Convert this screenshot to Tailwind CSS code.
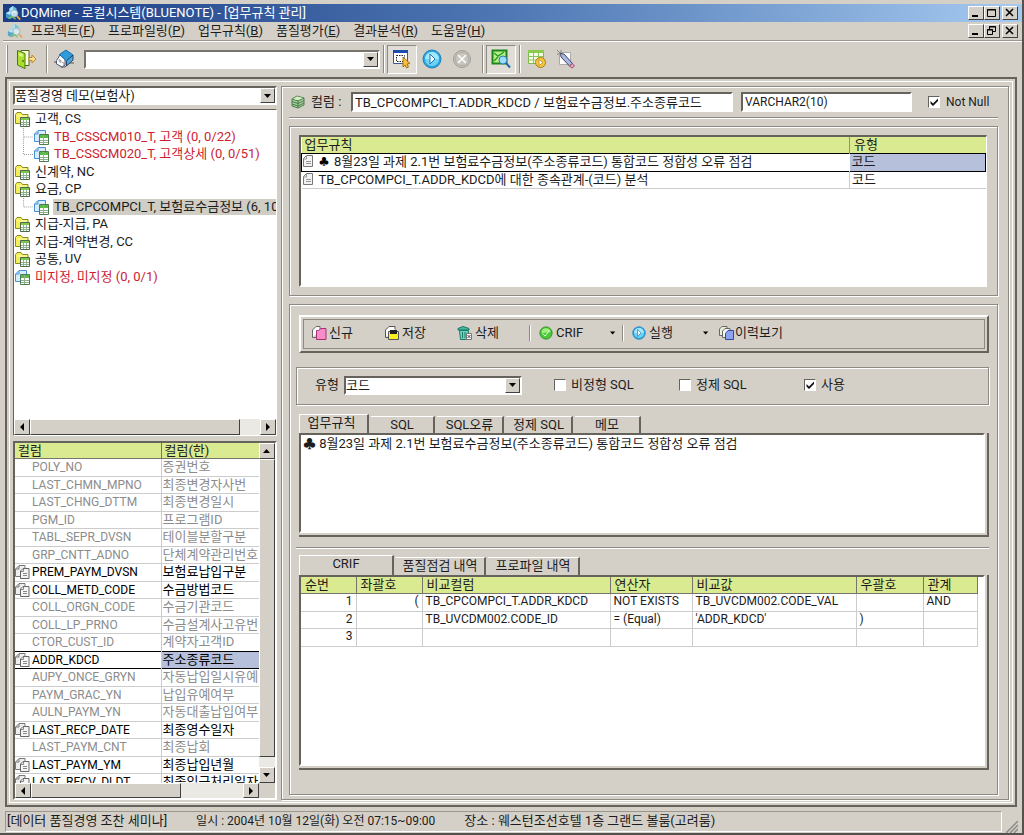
<!DOCTYPE html>
<html lang="ko">
<head>
<meta charset="utf-8">
<title>DQMiner</title>
<script src="https://cdn.jsdelivr.net/npm/@tailwindcss/browser@4"></script>
</head>
<body class="bg-[#d4d0c8] font-['Roboto','Noto_Sans_CJK_KR',sans-serif] text-[13px] leading-4 text-[#1c1c1c]">

<svg class="hidden" aria-hidden="true">
  <symbol id="folder" viewBox="0 0 16 16">
    <path d="M.5 12.500V3.500L2 1.500h4l1.500 2h5.500v9z" fill="#f4ee5a" stroke="#8a8a1c"/>
    <path d="M2 5h10" stroke="#fffbb0"/>
    <path d="M5.500 6.500h9v9h-9z" fill="#fff" stroke="#4c6b4c"/><path d="M6 7h8v2H6z" fill="#7cc84c"/>
    <path d="M6 11.500h8M6 13.500h8M8.500 9v6M11.500 9v6" stroke="#8fb08f"/>
  </symbol>
  <symbol id="sheet" viewBox="0 0 16 16">
    <path d="M.5 12.500V5L4 1.500h7.500v11z" fill="#d6ecff" stroke="#4a90d8"/><path d="M4 2v3H1" fill="none" stroke="#4a90d8"/>
    <path d="M5.500 5.500h9v10h-9z" fill="#fff" stroke="#4c7b4c"/><path d="M6 6h8v3H6z" fill="#5cb848"/>
    <path d="M6 11.500h8M6 13.500h8M9.500 6v9" stroke="#8fb08f"/>
  </symbol>
  <symbol id="copy" viewBox="0 0 16 16">
    <path d="M.5 12.500V5L4 1.500h6v11z" fill="#eee" stroke="#777"/><path d="M4 2v3H1" fill="none" stroke="#777"/>
    <path d="M5.500 14.500V7L8 4.500h6v10z" fill="#f4f4f4" stroke="#666"/><path d="M8.500 5v2.500H6M8 9.500h4M8 11.500h4" fill="none" stroke="#888"/>
  </symbol>
  <symbol id="page" viewBox="0 0 12 14">
    <path d="M1.500 12.500V4.500L4.500 1.500h6v11z" fill="#f2f2f2" stroke="#777"/><path d="M4.500 2v3h-3M4 7.500h5M4 9.500h5" fill="none" stroke="#999"/>
  </symbol>
  <symbol id="arrow-down" viewBox="0 0 8 8"><path d="M0 2h7L3.500 6z" fill="#000"/></symbol>
  <symbol id="arrow-up" viewBox="0 0 8 8"><path d="M0 6h7L3.500 2z" fill="#000"/></symbol>
  <symbol id="arrow-left" viewBox="0 0 8 8"><path d="M6 0v8L2 4z" fill="#000"/></symbol>
  <symbol id="arrow-right" viewBox="0 0 8 8"><path d="M2 0v8l4-4z" fill="#000"/></symbol>
  <symbol id="check" viewBox="0 0 12 12"><path d="M2.500 5v2.500L5 10l5-5V2.500L5 7.500z" fill="#111"/></symbol>
  <symbol id="logo" viewBox="0 0 18 18">
    <path d="M5 4l4-3 4 3v5H5z" fill="#5cc4ea"/><path d="M5 4l4-3v8H5z" fill="#a8e4f8"/>
    <path d="M1 9l4-2 4 2v5l-4 2-4-2z" fill="#3a9ccc"/><path d="M1 9l4-2 4 2-4 2z" fill="#b6ecfa"/>
    <circle cx="10.500" cy="9.500" r="4" fill="#dff4fc" fill-opacity=".85" stroke="#9aa8b4"/><path d="M13.500 12.500l3.500 4" stroke="#e8a040" stroke-width="2"/>
    <path d="M4 15l4-2 4 3" stroke="#7ac060" fill="none" stroke-width="1.500"/>
  </symbol>
  <symbol id="play" viewBox="0 0 20 20">
    <circle cx="10" cy="10" r="9" fill="#2aa4e0" stroke="#2380b8"/><circle cx="10" cy="10" r="7" fill="#6cd2f6"/>
    <path d="M3 10a7 7 0 0 1 14 0z" fill="#a4e8fc"/><path d="M8 5v10l5-5z" fill="#fff" stroke="#1878b4"/>
  </symbol>
</svg>

<div class="flex h-screen min-h-[600px] flex-col overflow-hidden border-r-2 border-b-2 border-[#55524e] pt-1 pl-[3px]">

  <!-- Title bar -->
  <header class="flex h-[18px] shrink-0 items-center bg-linear-to-r from-[#1c3c84] via-[#5078b4] to-[#a6caf0] pr-1 pb-px pl-0.5 text-white">
    <svg class="h-4 w-4 shrink-0"><use href="#logo"/></svg>
    <h1 class="flex-1 whitespace-nowrap">DQMiner - 로컬시스템(BLUENOTE) - [업무규칙 관리]</h1>
    <div class="flex">
      <button aria-label="최소화" class="h-[14px] w-4 border border-white border-r-[#404040] border-b-[#404040] bg-[#d4d0c8]"><svg class="h-3 w-3" viewBox="0 0 12 12"><path d="M3 9h6" stroke="#000" stroke-width="2"/></svg></button>
      <button aria-label="최대화" class="h-[14px] w-4 border border-white border-r-[#404040] border-b-[#404040] bg-[#d4d0c8]"><svg class="h-3 w-3" viewBox="0 0 12 12"><path d="M2.500 2.500h8v7h-8zM2 3h9" fill="none" stroke="#000"/></svg></button>
      <button aria-label="닫기" class="ml-0.5 h-[14px] w-4 border border-white border-r-[#404040] border-b-[#404040] bg-[#d4d0c8]"><svg class="h-3 w-3" viewBox="0 0 12 12"><path d="M3 2l7 7M10 2L3 9" stroke="#000" stroke-width="1.500"/></svg></button>
    </div>
  </header>

  <!-- Menu -->
  <nav class="flex h-[19px] shrink-0 items-center border-b border-[#9b978f] pr-1 pl-1 whitespace-nowrap">
    <svg class="h-4 w-4 shrink-0 opacity-80"><use href="#logo"/></svg>
    <div class="ml-2 flex flex-1 gap-[13px]">
      <button>프로젝트(<u>F</u>)</button><button>프로파일링(<u>P</u>)</button><button>업무규칙(<u>B</u>)</button><button>품질평가(<u>E</u>)</button><button>결과분석(<u>R</u>)</button><button>도움말(<u>H</u>)</button>
    </div>
    <div class="flex">
      <button aria-label="창 최소화" class="h-[14px] w-4 border border-white border-r-[#404040] border-b-[#404040]"><svg class="h-3 w-3" viewBox="0 0 12 12"><path d="M3 9h6" stroke="#000" stroke-width="2"/></svg></button>
      <button aria-label="창 복원" class="h-[14px] w-4 border border-white border-r-[#404040] border-b-[#404040]"><svg class="h-3 w-3" viewBox="0 0 12 12"><path d="M4.500 4V1.500h6v5H8M4 2h7M2.500 4.500h5v5h-5zM2 5h6" fill="none" stroke="#000"/></svg></button>
      <button aria-label="창 닫기" class="ml-0.5 h-[14px] w-4 border border-white border-r-[#404040] border-b-[#404040]"><svg class="h-3 w-3" viewBox="0 0 12 12"><path d="M3 2l7 7M10 2L3 9" stroke="#000" stroke-width="1.500"/></svg></button>
    </div>
  </nav>

  <!-- Toolbar -->
  <div class="mb-px flex h-[35px] shrink-0 items-center border-t border-white pl-[3px]">
    <div class="h-7 w-0.5 border-l border-white bg-[#8d8a84]"></div>
    <button aria-label="종료" class="ml-2"><svg class="h-5 w-5" viewBox="0 0 20 20"><path d="M5 1.500h8v15H5z" fill="#fffde0" stroke="#4a6a14"/><path d="M1.500 1.500L9 4.500v15L1.500 16z" fill="#a8e02c" stroke="#4a7a10"/><path d="M3 3.500L7 5v3L3 7z" fill="#d8f67c"/><path d="M13 8.500h3V6l4 4-4 4v-2.500h-3z" fill="#fbe08c" stroke="#b88830"/><path d="M7 11v2" stroke="#333"/></svg></button>
    <div class="ml-2.5 h-7 w-0.5 border-r border-white bg-[#8d8a84]"></div>
    <button aria-label="홈" class="ml-1.5"><svg class="h-5 w-5" viewBox="0 0 20 20"><path d="M0 13h4l3 5h4l4-4h5" stroke="#555" fill="none"/><path d="M2.500 11.500L6 6l5 4v6l-3 2-5.500-3z" fill="#fff" stroke="#557"/><path d="M5.500 5.500L12 1l7 5-6.500 6z" fill="#2c9cdc" stroke="#186ca4"/><path d="M12.500 12L19 6v5l-6.500 6z" fill="#58a8dc" stroke="#246"/><path d="M5 10.500l2 1v2l-2-1zM8 13l2 1v3" stroke="#777" fill="#ddd" stroke-width=".6"/></svg></button>
    <div class="relative ml-2.5 h-[19px] w-[296px]">
      <select aria-label="검색" class="block h-full w-full appearance-none border-2 border-[#77746e] border-r-white border-b-white bg-white px-1"><option></option></select>
      <span class="pointer-events-none absolute top-0.5 right-0.5 flex h-[15px] w-[15px] items-center justify-center border border-white border-r-[#404040] border-b-[#404040] bg-[#d4d0c8]"><svg class="h-2 w-2"><use href="#arrow-down"/></svg></span>
    </div>
    <div class="ml-[3px] h-7 w-0.5 border-r border-white bg-[#8d8a84]"></div>
    <button aria-label="선택" class="ml-0.5 flex h-[29px] w-[30px] items-center justify-center border border-[#8d8a84] border-r-white border-b-white bg-[#e0ddd6]"><svg class="h-5 w-5" viewBox="0 0 20 20"><path d="M1.500 2.500h14v12h-14z" fill="#fff" stroke="#3a5a9c"/><path d="M1 1h15v3H1z" fill="#1c4cb0"/><path d="M4.500 6.500h8v6h-8z" fill="none" stroke="#222" stroke-dasharray="1.500 1"/><path d="M11 8l7 6.500-3 .5 1.500 3-2 1-1.500-3-2 2z" fill="#fcc040" stroke="#a86c10"/></svg></button>
    <button aria-label="실행" class="ml-[5px]"><svg class="h-5 w-5"><use href="#play"/></svg></button>
    <button aria-label="중지" class="ml-2.5"><svg class="h-5 w-5" viewBox="0 0 20 20"><circle cx="10" cy="10" r="8.500" fill="#c4c1bb" stroke="#a19e98"/><circle cx="10" cy="10" r="6.500" fill="#cac7c1" stroke="#b0ada7"/><path d="M6 6l8 8M14 6l-8 8" stroke="#fff" stroke-width="1.500"/></svg></button>
    <div class="ml-2.5 h-7 w-0.5 border-r border-white bg-[#8d8a84]"></div>
    <button aria-label="조회" class="ml-0.5 flex h-[29px] w-[30px] items-center justify-center border border-[#8d8a84] border-r-white border-b-white bg-[#e0ddd6]"><svg class="h-5 w-5" viewBox="0 0 20 20"><path d="M1.500 1.500h14v13h-14z" fill="#b8f08c" stroke="#1c8418" stroke-width="2"/><path d="M3 4l4 3 6-4M3 12l4-4" stroke="#2c9c24" fill="none" stroke-width="1.500"/><circle cx="12" cy="11" r="4" fill="#9cdcf8" stroke="#2c7cb0"/><path d="M15 14l4 4.500" stroke="#1c6ca8" stroke-width="2"/></svg></button>
    <div class="ml-[3px] h-7 w-0.5 border-r border-white bg-[#8d8a84]"></div>
    <button aria-label="일정" class="ml-1.5"><svg class="h-5 w-5" viewBox="0 0 20 20"><path d="M1.500 1.500h15v13h-15z" fill="#f4fce8" stroke="#7cb848"/><path d="M1 1h16v3H1z" fill="#8ccc4c"/><path d="M1 7.500h15M1 11h15M6.500 2v12M11.500 2v12" stroke="#8cc45c"/><circle cx="13.500" cy="13.500" r="5" fill="#f8c83c" stroke="#b07c18"/><path d="M12 10.500v6l4-3z" fill="#fff" stroke="#b07c18" stroke-width=".7"/></svg></button>
    <button aria-label="편집" class="ml-[9px]"><svg class="h-5 w-5" viewBox="0 0 20 20"><path d="M3.500 3.500h11v12h-11z" fill="#fff" stroke="#aaa"/><path d="M1 1l4 4M1 5h3M5 1v3" stroke="#888"/><path d="M4.500 4.500L8 5l8.500 9.500-3 2.500L5 8z" fill="#a8b8e8" stroke="#445"/><path d="M13.500 17l3-2.500 2 2.500-2.500 2z" fill="#f0a0c0" stroke="#a05078"/></svg></button>
  </div>

  <!-- Workspace -->
  <main class="mr-[5px] ml-[2px] flex min-h-0 flex-1 border-2 border-[#66635d] p-0.5">
    <div class="flex min-w-0 flex-1 gap-1 border border-white p-[3px] pt-1 pb-0.5">

      <!-- Left column -->
      <aside class="flex w-[264px] shrink-0 flex-col">
        <div class="relative h-[19px] shrink-0">
          <select aria-label="시스템" class="block h-full w-full appearance-none border-2 border-[#66635d] border-r-white border-b-white bg-white p-0 leading-[15px]"><option>품질경영 데모(보험사)</option></select>
          <span class="pointer-events-none absolute top-0.5 right-0.5 flex h-[15px] w-[15px] items-center justify-center border border-white border-r-[#404040] border-b-[#404040] bg-[#d4d0c8]"><svg class="h-2 w-2"><use href="#arrow-down"/></svg></span>
        </div>

        <div class="mt-1 flex min-h-0 flex-[327] flex-col border border-[#66635d] border-r-white border-b-white bg-white">
          <ul id="tree" class="min-h-0 flex-1 overflow-hidden pl-px whitespace-nowrap"></ul>
          <div class="flex h-4 shrink-0 bg-[#ebe9e4]">
            <button aria-label="왼쪽으로" class="flex w-4 items-center justify-center border border-white border-r-[#404040] border-b-[#404040] bg-[#d4d0c8]"><svg class="h-2 w-2"><use href="#arrow-left"/></svg></button>
            <div class="w-[210px] border border-white border-r-[#404040] border-b-[#404040] bg-[#d4d0c8]"></div>
            <button aria-label="오른쪽으로" class="ml-auto flex w-4 items-center justify-center border border-white border-r-[#404040] border-b-[#404040] bg-[#d4d0c8]"><svg class="h-2 w-2"><use href="#arrow-right"/></svg></button>
          </div>
        </div>

        <div class="mt-[5px] flex min-h-0 flex-[358] border-2 border-[#66635d] border-r-white border-b-white bg-[#d4d0c8]">
          <div class="flex min-w-0 flex-1 flex-col">
            <div class="min-h-0 flex-1 overflow-hidden bg-white">
              <table class="w-full table-fixed border-collapse whitespace-nowrap">
                <thead><tr class="h-4 bg-[#d9ea90] text-left leading-[15px]">
                  <th class="w-[146px] border-r border-b border-[#77746e] p-0 pl-[3px] font-normal">컬럼</th>
                  <th class="border-b border-[#77746e] p-0 pl-[3px] font-normal">컬럼(한)</th>
                </tr></thead>
                <tbody id="columns"></tbody>
              </table>
            </div>
            <div class="flex h-[15px] shrink-0 bg-[#ebe9e4]">
              <button aria-label="왼쪽으로" class="flex w-4 items-center justify-center border border-white border-r-[#404040] border-b-[#404040] bg-[#d4d0c8]"><svg class="h-2 w-2"><use href="#arrow-left"/></svg></button>
              <div class="w-[150px] border border-white border-r-[#404040] border-b-[#404040] bg-[#d4d0c8]"></div>
              <button aria-label="오른쪽으로" class="ml-auto flex w-4 items-center justify-center border border-white border-r-[#404040] border-b-[#404040] bg-[#d4d0c8]"><svg class="h-2 w-2"><use href="#arrow-right"/></svg></button>
            </div>
          </div>
          <div class="mb-[15px] flex w-4 shrink-0 flex-col bg-[#ebe9e4]">
            <button aria-label="위로" class="flex h-4 items-center justify-center border border-white border-r-[#404040] border-b-[#404040] bg-[#d4d0c8]"><svg class="h-2 w-2"><use href="#arrow-up"/></svg></button>
            <div class="mb-2.5 flex-1 border border-white border-r-[#404040] border-b-[#404040] bg-[#d4d0c8]"></div>
            <button aria-label="아래로" class="flex h-4 items-center justify-center border border-white border-r-[#404040] border-b-[#404040] bg-[#d4d0c8]"><svg class="h-2 w-2"><use href="#arrow-down"/></svg></button>
          </div>
        </div>
      </aside>

      <!-- Right column -->
      <section class="flex min-w-0 flex-1 flex-col border border-[#8d8a84] pr-2.5 pb-1 pl-[7px] shadow-[inset_1px_1px_0_#fff,1px_1px_0_#fff]">
        <div class="flex h-[31px] shrink-0 items-center border-b border-[#8d8a84] pl-0.5 shadow-[0_1px_0_#fff]">
          <svg class="h-[14px] w-[14px] shrink-0" viewBox="0 0 14 14"><path d="M1 4l5-3 7 2v7l-6 3-6-2z" fill="#a8d09c" stroke="#4c7c4c"/><path d="M1 4l6 2 6-3M7 6v7M1 6.500l6 2 6-3M1 9l6 2 6-3" fill="none" stroke="#4c7c4c"/><path d="M2 4l4-2.500L12 3 7 5z" fill="#d4f0c4"/></svg>
          <label for="column-name" class="ml-1.5 w-10 whitespace-nowrap">컬럼 :</label>
          <input id="column-name" value="TB_CPCOMPCI_T.ADDR_KDCD / 보험료수금정보.주소종류코드" class="h-5 w-[382px] border-2 border-[#66635d] border-r-white border-b-white bg-white px-0.5 pb-0.5">
          <input aria-label="데이터 타입" value="VARCHAR2(10)" class="ml-2 h-5 w-[171px] border-2 border-[#66635d] border-r-white border-b-white bg-white px-0.5 text-xs">
          <label class="relative ml-4 flex items-center whitespace-nowrap"><input type="checkbox" checked class="peer mr-1.5 h-3 w-3 appearance-none border border-[#66635d] border-r-white border-b-white bg-white"><svg class="absolute left-0 hidden h-3 w-3 peer-checked:block"><use href="#check"/></svg><span class="text-xs">Not Null</span></label>
        </div>

        <!-- Rule list -->
        <div class="mt-2 h-[170px] shrink-0 border border-[#8d8a84] pt-2 pr-2.5 pb-2 pl-[9px] shadow-[inset_1px_1px_0_#fff,1px_1px_0_#fff]">
          <div class="h-full border-2 border-r border-[#66635d] border-r-white border-b-white bg-white">
            <table class="w-full table-fixed border-collapse whitespace-nowrap">
              <thead><tr class="h-4 bg-[#d9ea90] text-left leading-[15px]">
                <th class="border-r border-[#8d9a60] p-0 pl-[3px] font-normal">업무규칙</th>
                <th class="w-[136px] p-0 pl-1 font-normal">유형</th>
              </tr></thead>
              <tbody class="leading-[15px]">
                <tr class="h-[18px] border border-black"><td class="p-0 align-top"><div class="flex h-[15px] items-center"><svg class="h-[14px] w-3"><use href="#page"/></svg><span class="ml-[5px] w-[15px] text-[10px] text-black">♣</span><span>8월23일 과제 2.1번 보험료수금정보(주소종류코드) 통합코드 정합성 오류 점검</span></div></td><td class="bg-[#b6c0da] p-0 pl-0.5 align-top">코드</td></tr>
                <tr class="h-[17px] border-b border-[#ccc]"><td class="border-r border-[#ccc] p-0 align-top"><div class="flex h-[15px] items-center"><svg class="h-[14px] w-3"><use href="#page"/></svg><span class="ml-[5px]">TB_CPCOMPCI_T.ADDR_KDCD에 대한 종속관계-(코드) 분석</span></div></td><td class="p-0 pl-0.5 align-top">코드</td></tr>
              </tbody>
            </table>
          </div>
        </div>

        <!-- Rule editor -->
        <div class="mt-2 flex min-h-0 flex-1 flex-col border border-[#8d8a84] pt-2.5 pr-2 pb-6 pl-1.5 shadow-[inset_1px_1px_0_#fff,1px_1px_0_#fff]">
          <div class="ml-[3px] h-[38px] shrink-0 border-2 border-white border-r-[#66635d] border-b-[#66635d] p-0.5">
            <div class="flex h-full items-center border border-[#8d8a84] pb-0.5 pl-[7px] whitespace-nowrap">
              <button class="flex w-[73px] items-center gap-0.5"><svg class="h-4 w-4" viewBox="0 0 16 16"><path d="M1.500 12.500V5L5 1.500h4v3" fill="#fff" stroke="#666"/><path d="M1.500 12.500h4" stroke="#666"/><path d="M5.500 14.500v-9h2L10 3.500h5v11z" fill="#f88cc8" stroke="#a83070"/></svg>신규</button>
              <button class="flex w-[73px] items-center gap-0.5"><svg class="h-4 w-4" viewBox="0 0 16 16"><path d="M1.500 12.500V5L5 1.500h6v3" fill="#fff" stroke="#555"/><path d="M1.500 12.500h3" stroke="#555"/><path d="M4.500 6.500h10v8h-10z" fill="#f8f020" stroke="#555"/><path d="M6 5h7v4H6z" fill="#222"/></svg>저장</button>
              <button class="flex w-[72px] items-center gap-0.5"><svg class="h-4 w-4" viewBox="0 0 16 16"><path d="M2.500 5.500h9l-1 9h-7z" fill="#6cd8c0" stroke="#187868"/><path d="M1 3.500l5-2 6 2v1.500H1z" fill="#48b8a0" stroke="#187868"/><path d="M5.500 7v6M8 7v6" stroke="#187868"/><path d="M9.500 8.500h5v6h-5z" fill="#fff" stroke="#777"/><path d="M10.500 10l3 3M13.500 10l-3 3" stroke="#444"/></svg>삭제</button>
              <div class="h-4 w-0.5 border-r border-white bg-[#8d8a84]"></div>
              <button class="ml-2 flex w-[71px] items-center gap-[3px]"><svg class="h-[14px] w-[14px]" viewBox="0 0 16 16"><circle cx="8" cy="8" r="7" fill="#4cc83c" stroke="#248c1c"/><path d="M3 8a5 5 0 0 1 10-1z" fill="#a0f080"/><path d="M4 8.500l3 3L12 5" fill="none" stroke="#e8ffe0"/></svg>CRIF</button>
              <button aria-label="CRIF 옵션"><svg class="h-1.5 w-1.5" viewBox="0 0 8 8"><use href="#arrow-down"/></svg></button>
              <div class="ml-1.5 h-4 w-0.5 border-r border-white bg-[#8d8a84]"></div>
              <button class="ml-2 flex w-[71px] items-center gap-[3px]"><svg class="h-[14px] w-[14px]" viewBox="0 0 20 20"><use href="#play"/></svg>실행</button>
              <button aria-label="실행 옵션"><svg class="h-1.5 w-1.5" viewBox="0 0 8 8"><use href="#arrow-down"/></svg></button>
              <button class="ml-2.5 flex items-center"><svg class="h-4 w-4" viewBox="0 0 16 16"><path d="M.5 10.500V4L3 1.500h5v9z" fill="#e8f0d8" stroke="#666"/><path d="M3.500 12.500V6L6 3.500h5v9z" fill="#f4f4f4" stroke="#666"/><path d="M6.500 14.500V8.500L9 5.500h5.500v9z" fill="#8ca4f0" stroke="#3048a0"/></svg>이력보기</button>
            </div>
          </div>

          <div class="mt-[14px] flex h-[38px] shrink-0 items-center border border-[#8d8a84] pb-0.5 pl-[18px] whitespace-nowrap shadow-[inset_1px_1px_0_#fff,1px_1px_0_#fff]">
            <label for="rule-type" class="w-[29px]">유형</label>
            <div class="relative h-[19px] w-[178px]">
              <select id="rule-type" class="block h-full w-full appearance-none border-2 border-[#66635d] border-r-white border-b-white bg-white p-0 leading-[15px]"><option>코드</option></select>
              <span class="pointer-events-none absolute top-0.5 right-0.5 flex h-[15px] w-[15px] items-center justify-center border border-white border-r-[#404040] border-b-[#404040] bg-[#d4d0c8]"><svg class="h-2 w-2"><use href="#arrow-down"/></svg></span>
            </div>
            <label class="ml-8 flex w-[125px] items-center gap-[5px]"><input type="checkbox" class="h-3 w-3 appearance-none border border-[#66635d] border-r-white border-b-white bg-white">비정형 SQL</label>
            <label class="flex w-[125px] items-center gap-[5px]"><input type="checkbox" class="h-3 w-3 appearance-none border border-[#66635d] border-r-white border-b-white bg-white">정제 SQL</label>
            <label class="relative flex items-center gap-[5px]"><input type="checkbox" checked class="peer h-3 w-3 appearance-none border border-[#66635d] border-r-white border-b-white bg-white"><svg class="absolute left-0 hidden h-3 w-3 peer-checked:block"><use href="#check"/></svg>사용</label>
          </div>

          <div role="tablist" class="mt-[9px] ml-[3px] flex h-[19px] shrink-0 items-end gap-0.5">
            <button role="tab" aria-selected="true" class="h-[19px] w-[70px] border-t border-r-2 border-l border-white border-r-[#66635d] pr-1 pb-0.5">업무규칙</button>
            <button role="tab" class="h-[17px] w-16 border-t border-r-2 border-white border-r-[#66635d]">SQL</button>
            <button role="tab" class="h-[17px] w-[67px] border-t border-r-2 border-white border-r-[#66635d]">SQL오류</button>
            <button role="tab" class="h-[17px] w-[67px] border-t border-r-2 border-white border-r-[#66635d]">정제 SQL</button>
            <button role="tab" class="h-[17px] w-[66px] border-t border-r-2 border-white border-r-[#66635d]">메모</button>
          </div>
          <div class="ml-[3px] flex min-h-0 flex-[102] border-r-2 border-b-2 border-[#66635d] pr-0.5 pb-0.5">
            <textarea aria-label="업무규칙" class="h-full w-full resize-none border-2 border-[#66635d] border-r-white border-b-white bg-white px-0.5 leading-[18px]">♣ 8월23일 과제 2.1번 보험료수금정보(주소종류코드) 통합코드 정합성 오류 점검</textarea>
          </div>

          <hr class="mt-2.5 h-0.5 shrink-0 border-t border-[#8d8a84] bg-white">

          <div role="tablist" class="mt-1.5 ml-[3px] flex h-5 shrink-0 items-end gap-0.5">
            <button role="tab" aria-selected="true" class="h-5 w-[95px] border-t border-r-2 border-l border-white border-r-[#66635d] pb-1">CRIF</button>
            <button role="tab" class="h-[18px] w-[90px] border-t border-r-2 border-white border-r-[#66635d] whitespace-nowrap">품질점검 내역</button>
            <button role="tab" class="h-[18px] w-[92px] border-t border-r-2 border-white border-r-[#66635d] whitespace-nowrap">프로파일 내역</button>
          </div>
          <div class="ml-[3px] min-h-0 flex-[196] border-r-2 border-b-2 border-[#66635d] pr-0.5 pb-0.5">
            <div class="h-full overflow-hidden border-2 border-[#66635d] border-r-white border-b-white bg-white">
              <table class="w-[676px] table-fixed border-collapse whitespace-nowrap">
                <colgroup><col class="w-[55px]"><col class="w-[66px]"><col class="w-[188px]"><col class="w-[82px]"><col class="w-[164px]"><col class="w-[67px]"><col class="w-[54px]"></colgroup>
                <thead><tr class="h-[17px] bg-[#d9ea90] text-left leading-[15px] [&>th]:border-r [&>th]:border-b [&>th]:border-[#77746e] [&>th]:p-0 [&>th]:pl-1 [&>th]:font-normal">
                  <th>순번</th><th>좌괄호</th><th>비교컬럼</th><th>연산자</th><th>비교값</th><th>우괄호</th><th>관계</th>
                </tr></thead>
                <tbody class="text-xs leading-[15px] [&_td]:border-r [&_td]:border-b [&_td]:border-[#ccc] [&_td]:px-[3px] [&_td]:py-0 [&_td]:align-top">
                  <tr class="h-[18px]"><td class="text-right">1</td><td class="text-right">(</td><td>TB_CPCOMPCI_T.ADDR_KDCD</td><td>NOT EXISTS</td><td>TB_UVCDM002.CODE_VAL</td><td></td><td>AND</td></tr>
                  <tr class="h-[17px]"><td class="text-right">2</td><td></td><td>TB_UVCDM002.CODE_ID</td><td>= (Equal)</td><td>'ADDR_KDCD'</td><td>)</td><td></td></tr>
                  <tr class="h-[18px]"><td class="text-right">3</td><td></td><td></td><td></td><td></td><td></td><td></td></tr>
                </tbody>
              </table>
            </div>
          </div>
        </div>
      </section>
    </div>
  </main>

  <!-- Status bar -->
  <footer class="mt-0.5 flex h-6 shrink-0 items-center pl-0.5">
    <div class="flex h-[21px] flex-1 items-center gap-[29px] border border-[#9b978f] border-r-white border-b-white pl-px whitespace-nowrap">
      <span>[데이터 품질경영 조찬 세미나]</span><span class="text-xs">일시 : 2004년 10월 12일(화) 오전 07:15~09:00</span><span>장소 : 웨스턴조선호텔 1층 그랜드 볼룸(고려룸)</span>
    </div>
    <svg class="mr-1 ml-1 h-3 w-3 self-end" viewBox="0 0 12 12"><path d="M0 12L12 0M4 12l8-8M8 12l4-4" stroke="#8d8a84" stroke-width="1.500"/></svg>
  </footer>
</div>

<script>
  const tree = [
    ['folder', '고객, CS'],
    ['sheet', 'TB_CSSCM010_T, 고객 (0, 0/22)', 'red', 'mid'],
    ['sheet', 'TB_CSSCM020_T, 고객상세 (0, 0/51)', 'red', 'last'],
    ['folder', '신계약, NC'],
    ['folder', '요금, CP'],
    ['sheet', 'TB_CPCOMPCI_T, 보험료수금정보 (6, 10', 'selected', 'last'],
    ['folder', '지급-지급, PA'],
    ['folder', '지급-계약변경, CC'],
    ['folder', '공통, UV'],
    ['sheet', '미지정, 미지정 (0, 0/1)', 'red'],
  ];
  const tone = { red: 'text-[#cc2230]', selected: 'bg-[#d0cdc5] flex-1' };
  document.getElementById('tree').innerHTML = tree.map(([icon, text, kind, branch]) => {
    const line = branch
      ? `<svg class="h-full w-[19px] shrink-0" viewBox="0 0 19 18"><path d="M8.500 0V${branch === 'mid' ? 18 : 10}M9 9.500h10" fill="none" stroke="#999" stroke-dasharray="1 1"/></svg>`
      : '';
    return `<li class="flex items-center odd:h-[18px] even:h-[17px]">${line}<svg class="h-4 w-4 shrink-0"><use href="#${icon}"/></svg><span class="ml-[3px] px-px ${tone[kind] || ''}">${text}</span></li>`;
  }).join('');

  const columns = [
    ['POLY_NO', '증권번호'], ['LAST_CHMN_MPNO', '최종변경자사번'], ['LAST_CHNG_DTTM', '최종변경일시'],
    ['PGM_ID', '프로그램ID'], ['TABL_SEPR_DVSN', '테이블분할구분'], ['GRP_CNTT_ADNO', '단체계약관리번호'],
    ['PREM_PAYM_DVSN', '보험료납입구분', 1], ['COLL_METD_CODE', '수금방법코드', 1], ['COLL_ORGN_CODE', '수금기관코드'],
    ['COLL_LP_PRNO', '수금설계사고유번호'], ['CTOR_CUST_ID', '계약자고객ID'], ['ADDR_KDCD', '주소종류코드', 2],
    ['AUPY_ONCE_GRYN', '자동납입일시유예여'], ['PAYM_GRAC_YN', '납입유예여부'], ['AULN_PAYM_YN', '자동대출납입여부'],
    ['LAST_RECP_DATE', '최종영수일자', 1], ['LAST_PAYM_CNT', '최종납회'], ['LAST_PAYM_YM', '최종납입년월', 1],
    ['LAST_RECV_DLDT', '최종입금처리일자', 1],
  ];
  // A collapsed border belongs to the row above, so that row carries the selection's top edge.
  const edged = i => [columns[i], columns[i + 1]].some(row => row && row[2] === 2);
  document.getElementById('columns').innerHTML = columns.map(([name, label, used], i) => `
    <tr class="border-b odd:h-[18px] even:h-[17px] ${edged(i) ? 'border-black' : 'border-[#ccc]'} ${used ? 'text-black' : 'text-[#8c8c8c]'}">
      <td class="border-r border-r-[#ccc] p-0 align-top text-xs"><div class="flex h-4 items-center leading-[15px]"><span class="h-4 w-[17px] shrink-0">${used ? '<svg class="h-4 w-4"><use href="#copy"/></svg>' : ''}</span>${name}</div></td>
      <td class="overflow-hidden p-0 pl-px align-top leading-[15px] ${used === 2 ? 'bg-[#b6c0da]' : ''}">${label}</td>
    </tr>`).join('');
</script>
</body>
</html>
